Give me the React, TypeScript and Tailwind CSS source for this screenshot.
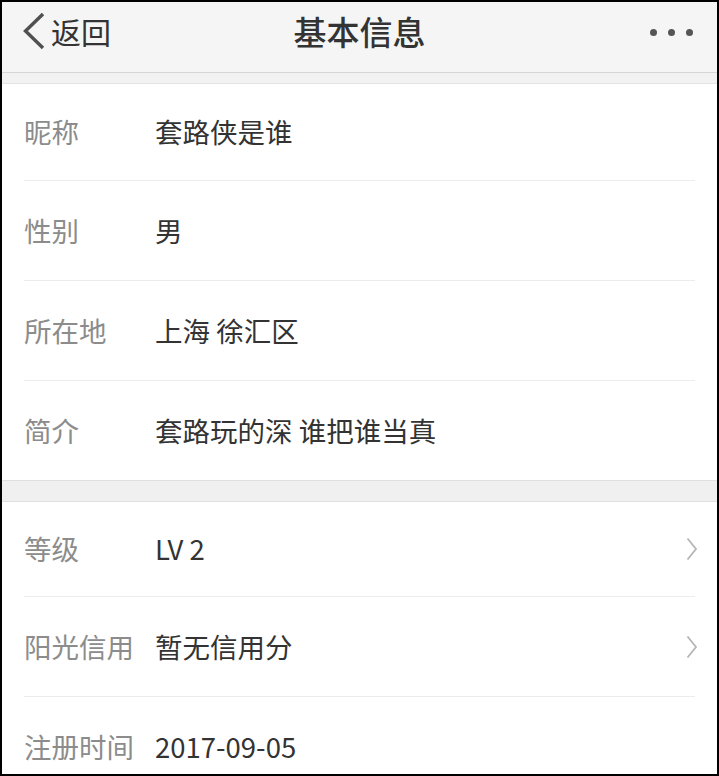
import React from "react"

interface Item { label: string; value: string; arrow?: boolean }

const basic: Item[] = [
  { label: "昵称", value: "套路侠是谁" },
  { label: "性别", value: "男" },
  { label: "所在地", value: "上海 徐汇区" },
  { label: "简介", value: "套路玩的深 谁把谁当真" },
]

const extra: Item[] = [
  { label: "等级", value: "LV 2", arrow: true },
  { label: "阳光信用", value: "暂无信用分", arrow: true },
  { label: "注册时间", value: "2017-09-05" },
]

function Row({ item, h, last }: { item: Item; h: string; last?: boolean }) {
  return (
    <div className="px-[22px] shrink-0">
      <div className={`flex items-center ${h} ${last ? "" : "border-b border-[#ececec]"}`}>
        <span className="w-[131px] shrink-0 text-[27.5px] text-[#8c8c8c]">{item.label}</span>
        <span className="flex-1 text-[27.5px] text-[#333]">{item.value}</span>
        {item.arrow && (
          <svg width="12" height="24" viewBox="0 0 12 24" className="mr-[-3px]">
            <path d="M1.5 1.5 L10 12 L1.5 22.5" fill="none" stroke="#b5b5b5" strokeWidth="1.8" />
          </svg>
        )}
      </div>
    </div>
  )
}

export default function App() {
  return (
    <div
      className="w-[719px] h-[776px] border-2 border-black bg-white overflow-hidden flex flex-col"
      style={{ fontFamily: '"Noto Sans CJK SC", "Noto Sans", sans-serif' }}
    >
      {/* Nav bar */}
      <div className="h-[71px] shrink-0 bg-[#f5f5f5] border-b border-[#d6d6d6] pt-[7px]">
        <div className="h-[44px] grid grid-cols-[1fr_auto_1fr] items-center">
          <div className="flex items-center pl-[19px]">
            <svg width="25" height="38" viewBox="0 0 25 38">
              <path d="M22 2 L4.5 19 L22 36" fill="none" stroke="#505050" strokeWidth="3.4" />
            </svg>
            <span className="text-[30px] text-[#333] ml-[5px] leading-none">返回</span>
          </div>
          <h1 className="text-[33px] font-medium text-[#333] leading-none">基本信息</h1>
          <div className="flex justify-end items-center gap-[11px] pr-[24px] pt-[2px]">
            <span className="w-[7px] h-[7px] rounded-full bg-[#555]" />
            <span className="w-[7px] h-[7px] rounded-full bg-[#555]" />
            <span className="w-[7px] h-[7px] rounded-full bg-[#555]" />
          </div>
        </div>
      </div>
      <div className="h-[11px] shrink-0 bg-[#f2f2f2] border-b border-[#e2e2e2]" />

      {basic.map((it, i) => (
        <Row
          key={it.label}
          item={it}
          h={i === 0 ? "h-[97px]" : i === basic.length - 1 ? "h-[99px]" : "h-[100px]"}
          last={i === basic.length - 1}
        />
      ))}

      <div className="h-[22px] shrink-0 bg-[#f0f0f0] border-y border-[#e0e0e0]" />

      {extra.map((it, i) => (
        <Row
          key={it.label}
          item={it}
          h={i === 0 ? "h-[95px]" : i === extra.length - 1 ? "h-[100px]" : "h-[100px]"}
          last={i === extra.length - 1}
        />
      ))}
    </div>
  )
}
